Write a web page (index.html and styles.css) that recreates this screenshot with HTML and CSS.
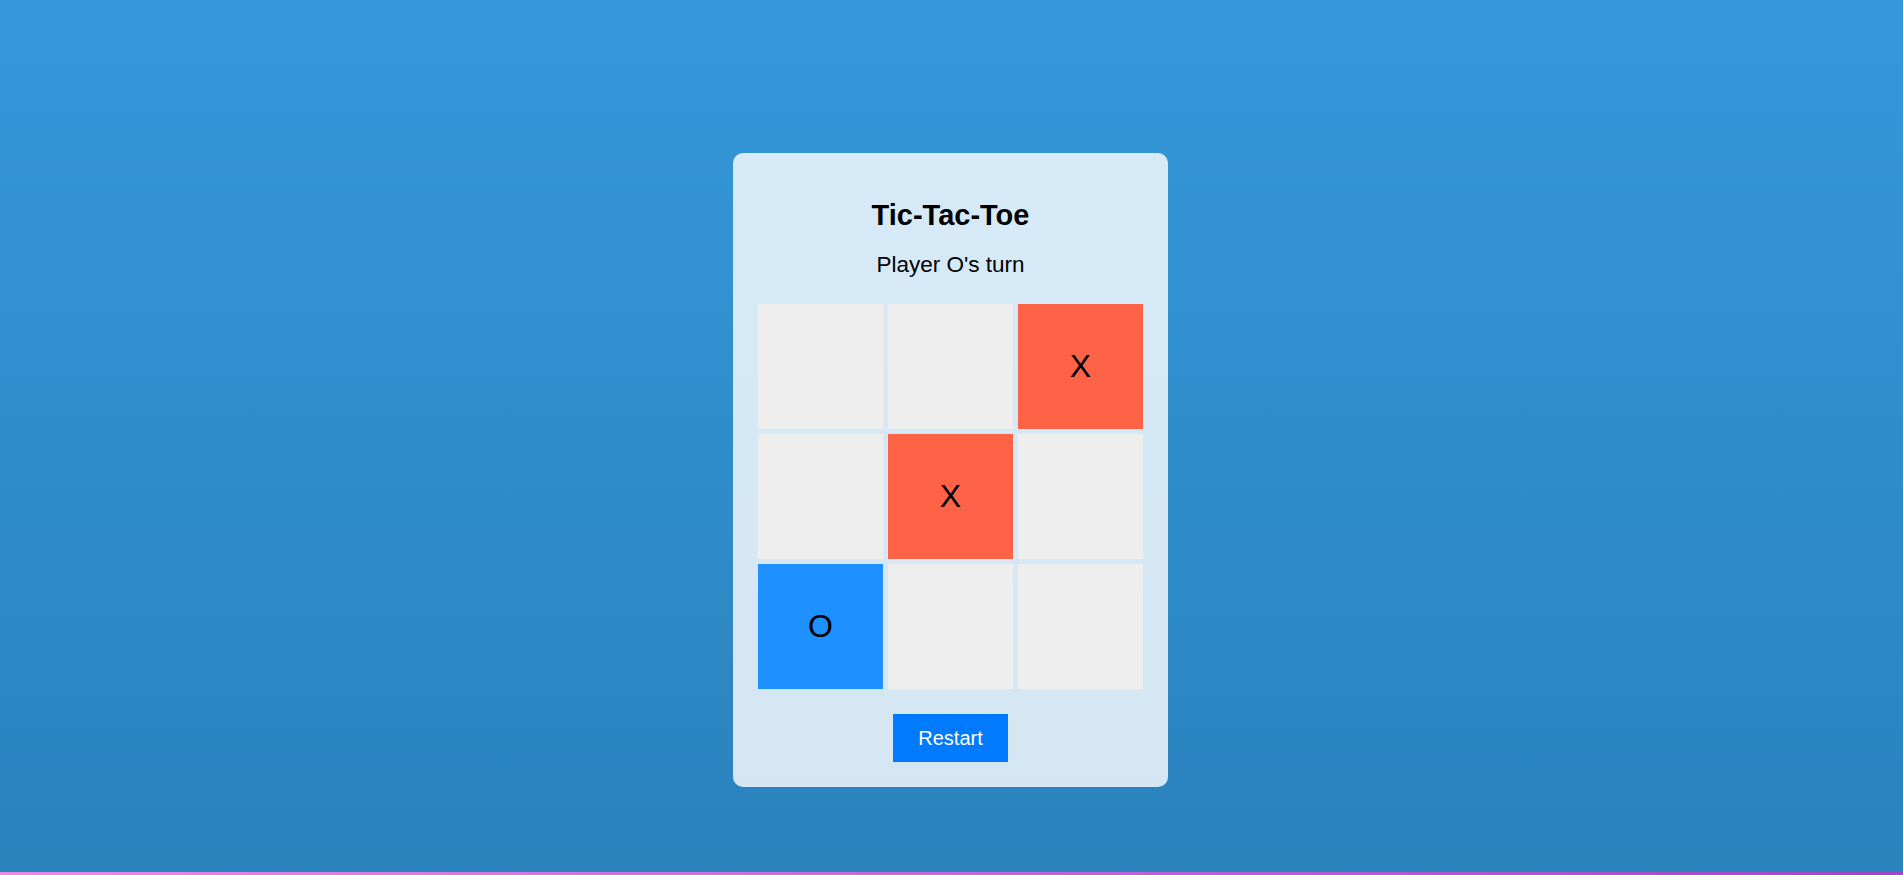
FILE: index.html
```html
<!DOCTYPE html>
<html lang="en">
<head>
<meta charset="utf-8">
<title>Tic-Tac-Toe</title>
<link rel="stylesheet" href="styles.css">
</head>
<body>
<div class="page">
  <div class="card">
    <h1 class="title">Tic-Tac-Toe</h1>
    <p class="status">Player O's turn</p>
    <div class="board">
      <div class="cell"></div>
      <div class="cell"></div>
      <div class="cell x">X</div>
      <div class="cell"></div>
      <div class="cell x">X</div>
      <div class="cell"></div>
      <div class="cell o">O</div>
      <div class="cell"></div>
      <div class="cell"></div>
    </div>
    <button class="restart">Restart</button>
  </div>
</div>
</body>
</html>
```
FILE: styles.css
```css
html, body {
  margin: 0;
  padding: 0;
}
body {
  font-family: "Liberation Sans", Arial, sans-serif;
  background: linear-gradient(to right, #e68ae8, #9f46c8);
  height: 100vh;
  overflow: hidden;
}
.page {
  height: calc(100vh - 3px);
  background: linear-gradient(to bottom, #3598db, #2a82bd);
  display: flex;
  justify-content: center;
  align-items: flex-start;
  padding-top: 153px;
  padding-right: 2px;
  box-sizing: border-box;
}
.card {
  width: 435px;
  box-sizing: border-box;
  padding: 25px;
  background: rgba(255, 255, 255, 0.8);
  border-radius: 10px;
  display: flex;
  flex-direction: column;
  align-items: center;
}
.title {
  font-size: 29px;
  line-height: 33px;
  font-weight: bold;
  margin: 21px 0 0;
  color: #000;
}
.status {
  font-size: 22.5px;
  line-height: 25px;
  margin: 20px 0 0;
  color: #000;
}
.board {
  margin-top: 27px;
  display: grid;
  grid-template-columns: repeat(3, 125px);
  grid-auto-rows: 125px;
  gap: 5px;
}
.cell {
  background: #eeeeee;
  display: flex;
  align-items: center;
  justify-content: center;
  font-size: 32px;
  color: #000;
}
.cell.x {
  background: #ff6347;
}
.cell.o {
  background: #1e90ff;
}
.restart {
  margin-top: 25px;
  font-family: "Liberation Sans", Arial, sans-serif;
  font-size: 20px;
  line-height: 24px;
  padding: 12px 25px;
  border: none;
  border-radius: 0;
  background: #007bff;
  color: #fff;
  cursor: pointer;
}
```
